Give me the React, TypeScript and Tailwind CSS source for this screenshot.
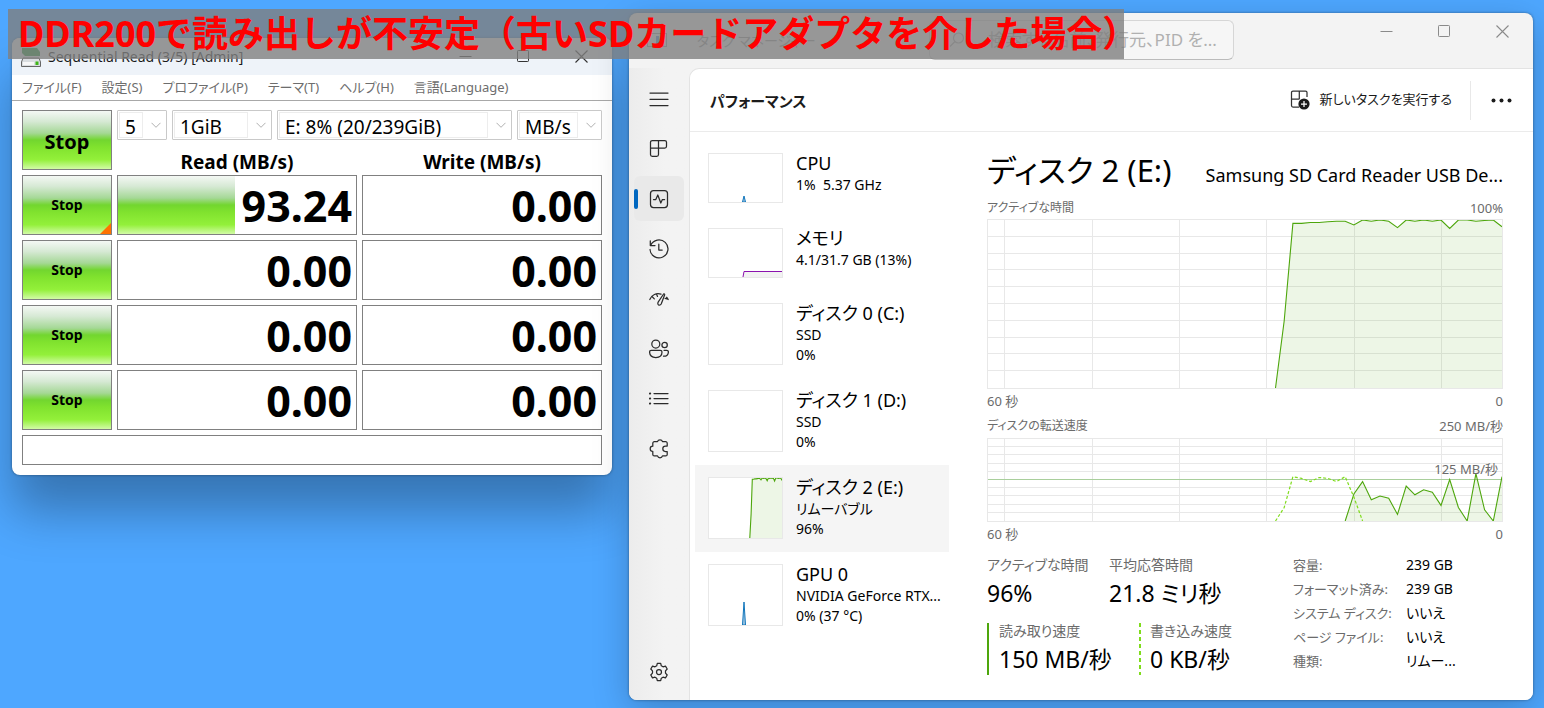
import type { ReactNode } from 'react';

const SANS = "font-['Noto_Sans','Noto_Sans_CJK_JP',sans-serif]";

const activeTime = [
  0, 40, 98, 98, 98.5, 98.5, 99, 99.3, 99.3, 97, 100, 99.3, 100, 99.3, 95.5, 100, 99.3, 100, 99.3, 100, 95, 100, 100,
  99.3, 99.7, 100, 96,
];
const readSpeed = [0, 33, 48, 26, 30.5, 27.7, 8, 42.6, 32, 38, 35, 19, 50.6, 16.5, 0, 57.8, 13.7, 0, 54];
const writeSpeed = [0, 16.5, 54, 52, 48, 53, 52, 48, 54, 29, 0];

const tests = [
  { read: '93.24', write: '0.00', progress: 49, marked: true },
  { read: '0.00', write: '0.00', progress: 0, marked: false },
  { read: '0.00', write: '0.00', progress: 0, marked: false },
  { read: '0.00', write: '0.00', progress: 0, marked: false },
];

const menus = ['ファイル(F)', '設定(S)', 'プロファイル(P)', 'テーマ(T)', 'ヘルプ(H)', '言語(Language)'];

// Samples are one second apart, the newest one sits at the right edge
function toPoints(values: number[], width: number, height: number, newest = 0) {
  const step = width / 59;
  return values.map((v, i) => {
    const x = width - (newest + values.length - 1 - i) * step;
    const y = height - (v / 100) * height;
    return [Math.round(x * 10) / 10, Math.round(y * 10) / 10];
  });
}

function Area({ values, width, height }: { values: number[]; width: number; height: number }) {
  const pts = toPoints(values, width, height);
  const line = pts.map(p => p.join(',')).join(' ');
  return (
    <>
      <polygon points={`${pts[0][0]},${height} ${line} ${width},${height}`} fill="#4da60c" fillOpacity="0.1" />
      <polyline points={line} fill="none" stroke="#4da60c" strokeWidth="1.1" vectorEffect="non-scaling-stroke" />
    </>
  );
}

function Chart({ height, label, children }: { height: number; label: string; children: ReactNode }) {
  const columns = [16, 104, 191, 278, 366, 453];
  return (
    <svg
      role="img"
      aria-label={label}
      viewBox={`0 0 514 ${height}`}
      preserveAspectRatio="none"
      className="block h-full w-full overflow-hidden"
    >
      <g stroke="#e8e8e8" strokeWidth="1">
        {columns.map(x => (
          <line key={x} x1={x + 0.5} x2={x + 0.5} y1="0" y2={height} />
        ))}
        {[1, 2, 3, 4, 5, 6, 7, 8, 9].map(i => (
          <line key={i} x1="0" x2="514" y1={Math.round((height * i) / 10) - 0.5} y2={Math.round((height * i) / 10) - 0.5} />
        ))}
      </g>
      {children}
    </svg>
  );
}

function WindowControls({ color }: { color: string }) {
  return (
    <div className={`flex shrink-0 pr-[2px] ${color}`}>
      <button aria-label="最小化" className="flex h-9 w-[58px] items-center justify-center">
        <svg width="13" height="13" viewBox="0 0 13 13" fill="none" stroke="currentColor"><path d="M0.5 6.5h12" /></svg>
      </button>
      <button aria-label="最大化" className="flex h-9 w-[58px] items-center justify-center">
        <svg width="13" height="13" viewBox="0 0 13 13" fill="none" stroke="currentColor"><rect x="0.5" y="0.5" width="11" height="11" rx="0.8" /></svg>
      </button>
      <button aria-label="閉じる" className="flex h-9 w-[58px] items-center justify-center">
        <svg width="13" height="13" viewBox="0 0 13 13" fill="none" stroke="currentColor" strokeWidth="1.1"><path d="M0.5 0.5l12 12M12.5 0.5l-12 12" /></svg>
      </button>
    </div>
  );
}

function Dropdown({ label, value, className }: { label: string; value: string; className: string }) {
  return (
    <div className={`relative h-[30px] rounded-[1px] border border-[#c9c9c9] bg-white p-px ${className}`}>
      <select
        aria-label={label}
        className="h-full w-[calc(100%-22px)] appearance-none border border-[#ededed] bg-white pl-[5px] pt-[2px] text-[19px] leading-6 text-black"
      >
        <option>{value}</option>
      </select>
      <svg className="pointer-events-none absolute right-[5px] top-[11px]" width="10" height="7" viewBox="0 0 10 7" fill="none" stroke="#b0b0b0">
        <path d="M0.5 0.8L5 5.3L9.5 0.8" />
      </svg>
    </div>
  );
}

const GREEN =
  'bg-[linear-gradient(to_bottom,#f4f8f4_0%,#d6e9d4_18%,#a5d896_38%,#72d62f_50%,#80e22e_62%,#93f03a_84%,#d2fba6_100%)]';

function DiskMarkWindow() {
  return (
    <section className="mt-[38px] w-[600px] shrink-0 self-start overflow-hidden rounded-lg bg-white shadow-[0_36px_50px_rgba(0,0,0,0.3),0_0_3px_rgba(0,0,0,0.4)]">
      <header className="flex h-[37px] items-center justify-between bg-[#eef3f9] pl-[9px]">
        <div className="flex items-center gap-[7px]">
          <svg width="20" height="22" viewBox="0 0 20 22">
            <path d="M1 2h15l3 4v4H4L1 7z" fill="#1f9b3a" />
            <path d="M2 12h16l1.500 4v4.500H0.500V16z" fill="#d9dde0" stroke="#666" strokeWidth="1" />
            <rect x="2" y="16" width="11" height="3" fill="#f7f7f7" />
            <rect x="14.500" y="15.500" width="3" height="3.500" fill="#3fb618" />
          </svg>
          <h1 className="text-sm leading-5 text-[#1a1a1a]">Sequential Read (3/5) [Admin]</h1>
        </div>
        <WindowControls color="text-[#333]" />
      </header>
      <nav className="flex h-[26px] items-center gap-5 border-b border-[#a8a8a8] px-[10px] text-[13px] text-[#6d6d6d]">
        {menus.map(m => (
          <button key={m} className="whitespace-nowrap">{m}</button>
        ))}
      </nav>

      <div className="grid grid-cols-[90px_1fr_1fr] gap-[5px] px-[10px] pb-[10px] pt-[9px]">
        <button className={`h-[60px] border border-[#808080] pt-1 text-xl font-bold text-black ${GREEN}`}>Stop</button>
        <div className="col-span-2 h-[60px]">
          <div className="flex gap-[5px]">
            <Dropdown label="回数" value="5" className="w-[50px]" />
            <Dropdown label="サイズ" value="1GiB" className="w-[100px]" />
            <Dropdown label="ドライブ" value="E: 8% (20/239GiB)" className="flex-1" />
            <Dropdown label="単位" value="MB/s" className="w-[85px]" />
          </div>
          <div className="grid grid-cols-2 gap-[5px] pt-3 text-center text-[19px] font-bold leading-5 text-black">
            <h2>Read (MB/s)</h2>
            <h2>Write (MB/s)</h2>
          </div>
        </div>

        {tests.map((t, i) => (
          <div key={i} className="contents">
            <button className={`relative h-[60px] border border-[#808080] text-sm font-bold text-black ${GREEN}`}>
              Stop
              {t.marked && (
                <svg className="absolute bottom-0 right-0" width="11" height="11" viewBox="0 0 11 11"><path d="M11 0v11H0z" fill="#ff7200" /></svg>
              )}
            </button>
            <div className="relative h-[60px] border border-[#808080] bg-white pr-1 text-right text-[43px] font-bold leading-[60px] text-black">
              <div className={`absolute inset-y-0 left-0 ${GREEN}`} style={{ width: `${t.progress}%` }}></div>
              <span className="relative">{t.read}</span>
            </div>
            <div className="h-[60px] border border-[#808080] bg-white pr-1 text-right text-[43px] font-bold leading-[60px] text-black">
              {t.write}
            </div>
          </div>
        ))}
        <div className="col-span-3 h-[30px] border border-[#808080] bg-white"></div>
      </div>
    </section>
  );
}

function Icon({ children }: { children: ReactNode }) {
  return (
    <svg width="20" height="20" viewBox="0 0 20 20" fill="none" stroke="#2b2b2b" strokeWidth="1.25" strokeLinecap="round" strokeLinejoin="round">
      {children}
    </svg>
  );
}

const navItems = [
  { label: 'メニュー', icon: <path d="M1 4h18M1 10.300h18M1 16.500h18" /> },
  {
    label: 'プロセス',
    icon: <path d="M3.300 1.500h12.400a1.800 1.800 0 0 1 1.800 1.800v3.900a1.800 1.800 0 0 1-1.800 1.800H1.500V3.300A1.800 1.800 0 0 1 3.300 1.500zM9.500 1.500v14a1.800 1.800 0 0 1-1.800 1.800H3.300A1.800 1.800 0 0 1 1.500 15.500V9" />,
  },
  {
    label: 'パフォーマンス',
    icon: (
      <>
        <rect x="1.500" y="1.500" width="17" height="17" rx="3" />
        <path d="M4.500 10.500h2.300L8.800 6l3 8 1.600-3.500h2.200" />
      </>
    ),
  },
  {
    label: 'アプリの履歴',
    icon: <path d="M1.300 1.800v4.700h4.700M1.700 6.300A9 9 0 1 1 1 10.500M9.800 5.200v5.800h3.400" />,
  },
  {
    label: 'スタートアップ アプリ',
    icon: (
      <>
        <path d="M0.800 10.500C2.600 5.800 7.500 3.600 12 5.200M17.600 8.300c0.700 0.700 1.200 1.400 1.600 2.200M3 7.500l2.300 2.400M7.400 4.800l1.100 2.600M18.900 10.200l-2.800-0.800" />
        <path d="M14.600 5L9.300 12.900c-1.700 2.800 1.500 4.700 3 1.800L15.600 6c0.300-0.900-0.500-1.500-1-1z" />
      </>
    ),
  },
  {
    label: 'ユーザー',
    icon: (
      <>
        <circle cx="6.800" cy="5" r="4" />
        <circle cx="15.600" cy="6" r="2.700" />
        <path d="M2.300 11.300h9a1.700 1.700 0 0 1 1.700 1.700c0 3.500-2.500 5.500-6.200 5.500S0.600 16.500 0.600 13a1.700 1.700 0 0 1 1.700-1.700zM15 11.300h2.800a1.600 1.600 0 0 1 1.600 1.600c0 2.800-1.800 4.500-4.900 4.300" />
      </>
    ),
  },
  {
    label: '詳細',
    icon: (
      <>
        <path d="M5 4.500h14M5 9.500h14M5 14.500h14" />
        <path d="M1 4.500h0.100M1 9.500h0.100M1 14.500h0.100" strokeWidth="2.200" />
      </>
    ),
  },
  {
    label: 'サービス',
    icon: <path d="M8.500 2.700a2.600 2.600 0 0 1 5 0h3.200a1.500 1.500 0 0 1 1.500 1.500v2.900h-1.700a2.700 2.700 0 0 0 0 5.400h1.700v2.900a1.500 1.500 0 0 1-1.500 1.500h-3.200a2.600 2.600 0 0 1-5 0H5.300a1.500 1.500 0 0 1-1.500-1.500v-3a2.600 2.600 0 0 1 0-5.200V4.200a1.500 1.500 0 0 1 1.500-1.500z" />,
  },
];

function SideNav() {
  return (
    <nav className="flex w-[60px] shrink-0 flex-col gap-[5px] bg-gradient-to-r from-[#ececec] to-[#f3f3f3] to-60% px-[5px] pb-[6px] pt-2">
      {navItems.map((item, i) => (
        <button
          key={item.label}
          aria-label={item.label}
          className={`relative flex h-[45px] w-[50px] items-center justify-center rounded-md ${i === 2 ? 'bg-[#e9e9e9]' : ''}`}
        >
          {i === 2 && <span className="absolute left-0 top-[13px] h-5 w-1 rounded-full bg-[#0067c0]"></span>}
          <Icon>{item.icon}</Icon>
        </button>
      ))}
      <button aria-label="設定" className="mt-auto flex h-[45px] w-[50px] items-center justify-center">
        <Icon>
          <circle cx="10" cy="10" r="2.500" />
          <path d="M8.300 1.300h3.400l0.600 2.500 1.700 1 2.500-0.700 1.700 2.900-1.700 1.900v2.200l1.700 1.900-1.700 2.900-2.500-0.700-1.700 1-0.600 2.500H8.300l-0.600-2.500-1.700-1-2.500 0.700L1.800 13l1.700-1.900V8.900L1.800 7l1.700-2.900 2.500 0.700 1.700-1z" />
        </Icon>
      </button>
    </nav>
  );
}

interface Resource {
  name: string;
  lines: string[];
  graph?: ReactNode;
}

const resources: Resource[] = [
  { name: 'CPU', lines: ['1%\u00a0 5.37 GHz'], graph: <path d="M33.500 48L35 42l1.500 6z" fill="#1175bb" fillOpacity="0.4" stroke="#1175bb" /> },
  {
    name: 'メモリ',
    lines: ['4.1/31.7 GB (13%)'],
    graph: (
      <>
        <path d="M34 48l1-5.500h38V48z" fill="#f2f2f2" />
        <path d="M34 48l1-5.500h38" fill="none" stroke="#8b12ae" />
      </>
    ),
  },
  { name: 'ディスク 0 (C:)', lines: ['SSD', '0%'] },
  { name: 'ディスク 1 (D:)', lines: ['SSD', '0%'] },
  { name: 'ディスク 2 (E:)', lines: ['リムーバブル', '96%'], graph: <Area values={activeTime} width={73} height={60} /> },
  { name: 'GPU 0', lines: ['NVIDIA GeForce RTX...', '0% (37 °C)'], graph: <path d="M33.500 60L35 37l1.500 23z" fill="#1175bb" fillOpacity="0.4" stroke="#1175bb" /> },
];

function ResourceList() {
  return (
    <ul className="w-[254px] shrink-0 pt-[9px]">
      {resources.map((r, i) => {
        const tall = r.lines.length > 1;
        return (
          <li key={r.name}>
            <button className={`flex w-full items-start gap-[13px] px-[13px] pb-[13px] pt-[10px] text-left ${i === 4 ? 'bg-[#f5f5f5]' : ''}`}>
              <span className={`mt-[2px] block w-[75px] shrink-0 border border-[#e8e8e8] bg-white ${tall ? 'h-[62px]' : 'h-[50px]'}`}>
                <svg className="block h-full w-full" viewBox={tall ? '0 0 73 60' : '0 0 73 48'}>{r.graph}</svg>
              </span>
              <span className="block whitespace-nowrap text-sm leading-5 text-black">
                <span className="block text-lg leading-6">{r.name}</span>
                {r.lines.map(l => (
                  <span key={l} className="block h-5">{l}</span>
                ))}
              </span>
            </button>
          </li>
        );
      })}
    </ul>
  );
}

const properties = [
  ['容量:', '239 GB'],
  ['フォーマット済み:', '239 GB'],
  ['システム ディスク:', 'いいえ'],
  ['ページ ファイル:', 'いいえ'],
  ['種類:', 'リムー...'],
];

function Stat({ label, value, className = '' }: { label: string; value: string; className?: string }) {
  return (
    <div className={`h-[52px] whitespace-nowrap ${className}`}>
      <dt className="text-sm leading-4 text-[#6b6b6b]">{label}</dt>
      <dd className="text-[23px] leading-10 text-black">{value}</dd>
    </div>
  );
}

function DiskDetail() {
  return (
    <div className="ml-[38px] mr-[30px] min-w-0 flex-1 pt-[14px]">
      <div className="flex items-baseline justify-between gap-6">
        <h2 className="whitespace-nowrap text-[31px] leading-[48px] text-black">ディスク 2 (E:)</h2>
        <p className="truncate text-lg text-black">Samsung SD Card Reader USB De...</p>
      </div>
      <div className="mt-1 flex justify-between text-[13px] leading-5 text-[#6b6b6b]">
        <span className="text-xs leading-5">アクティブな時間</span>
        <span>100%</span>
      </div>
      <div className="mt-px h-[170px] border border-[#e8e8e8]">
        <Chart height={168} label="アクティブな時間">
          <Area values={activeTime} width={514} height={168} />
        </Chart>
      </div>
      <div className="mt-[2px] flex justify-between text-[13px] leading-5 text-[#6b6b6b]">
        <span>60 秒</span>
        <span>0</span>
      </div>
      <div className="mt-[5px] flex justify-between text-[13px] leading-5 text-[#6b6b6b]">
        <span className="text-xs leading-5">ディスクの転送速度</span>
        <span>250 MB/秒</span>
      </div>
      <div className="relative mt-[2px] h-[84px] border border-[#e8e8e8]">
        <Chart height={82} label="ディスクの転送速度">
          <line x1="0" x2="514" y1="40.500" y2="40.500" stroke="#a9cf9c" />
          <Area values={readSpeed} width={514} height={82} />
          <polyline
            points={toPoints(writeSpeed, 514, 82, 16).map(p => p.join(',')).join(' ')}
            fill="none"
            stroke="#7fdc1c"
            strokeWidth="1.2"
            strokeDasharray="3 2"
          />
        </Chart>
        <span className="absolute right-1 top-5 text-[13px] leading-5 text-[#6b6b6b]">125 MB/秒</span>
      </div>
      <div className="mt-[2px] flex justify-between text-[13px] leading-5 text-[#6b6b6b]">
        <span>60 秒</span>
        <span>0</span>
      </div>

      <div className="mt-[13px] flex items-start">
        <dl className="grid flex-1 grid-cols-[122px_1fr] gap-y-[14px]">
          <Stat label="アクティブな時間" value="96%" />
          <Stat label="平均応答時間" value="21.8 ミリ秒" />
          <div className="col-span-2 flex">
            <Stat label="読み取り速度" value="150 MB/秒" className="w-[152px] border-l-2 border-[#4da60c] pl-[10px]" />
            <div className="flex gap-[9px]">
              <svg width="2" height="52" viewBox="0 0 2 52"><path d="M1 0v52" stroke="#7fdc1c" strokeWidth="2" strokeDasharray="4 3" /></svg>
              <Stat label="書き込み速度" value="0 KB/秒" />
            </div>
          </div>
        </dl>
        <dl className="-mt-1 w-[210px] shrink-0 text-sm leading-6">
          {properties.map(([k, v]) => (
            <div key={k} className="flex h-6 whitespace-nowrap">
              <dt className="w-[113px] text-[13px] leading-6 text-[#6b6b6b]">{k}</dt>
              <dd className="text-black">{v}</dd>
            </div>
          ))}
        </dl>
      </div>
    </div>
  );
}

function TaskManagerWindow() {
  return (
    <section className="mb-2 mt-[13px] flex min-w-0 flex-1 flex-col overflow-hidden rounded-lg bg-[#f3f3f3] shadow-[0_10px_36px_rgba(0,0,0,0.22),0_0_3px_rgba(0,0,0,0.4)]">
      <header className="flex h-[55px] shrink-0 items-start pl-[18px]">
        <div className="flex w-[282px] items-center gap-[30px] self-center">
          <svg width="20" height="16" viewBox="0 0 20 16" fill="none" stroke="#999">
            <rect x="0.500" y="0.500" width="19" height="13" />
            <rect x="9" y="3" width="3" height="10" fill="#4a90d9" stroke="none" />
            <rect x="14" y="6" width="3" height="7" fill="#4a90d9" stroke="none" />
          </svg>
          <h1 className="whitespace-nowrap text-sm text-[#999]">タスク マネージャー</h1>
        </div>
        <label className="mt-[7px] flex h-10 w-[305px] items-center gap-[22px] rounded-md border border-[#d6d6d6] border-b-[#bbb] bg-[#f6f6f6] pl-[18px]">
          <svg width="18" height="18" viewBox="0 0 18 18" fill="none" stroke="#aaa" strokeWidth="1.200">
            <circle cx="10.500" cy="7" r="5" />
            <path d="M7 10.500L2 15.500" />
          </svg>
          <input
            type="text"
            aria-label="検索"
            placeholder="検索する名前、発行元、PID を..."
            className="min-w-0 flex-1 bg-transparent text-[17px] outline-none placeholder:text-[#b0b0b0]"
          />
        </label>
        <div className="ml-auto">
          <WindowControls color="text-[#8a8a8a]" />
        </div>
      </header>
      <div className="flex flex-1">
        <SideNav />
        <main className="flex min-w-0 flex-1 flex-col rounded-tl-[10px] border-l border-t border-[#e3e3e3] bg-white">
          <header className="flex h-[63px] shrink-0 items-center border-b border-[#ebebeb] pl-5 pr-[21px]">
            <h2 className="flex-1 pt-[2px] text-[15px] font-bold text-[#1b1b1b]">パフォーマンス</h2>
            <button className="flex items-center gap-[10px] text-[13px] text-[#1b1b1b]">
              <svg width="20" height="20" viewBox="0 0 20 20" fill="none" stroke="#333" strokeWidth="1.250">
                <path d="M9 17H3a1.500 1.500 0 0 1-1.500-1.500V2.500A1.500 1.500 0 0 1 3 1h12.500A1.500 1.500 0 0 1 17 2.500V7M9.300 1v8M1.500 9h8" />
                <circle cx="14" cy="14" r="5.600" fill="#1b1b1b" stroke="none" />
                <path d="M14 11v6M11 14h6" stroke="#fff" />
              </svg>
              新しいタスクを実行する
            </button>
            <div className="ml-[18px] h-[39px] w-px bg-[#e8e8e8]"></div>
            <button aria-label="その他のオプション" className="ml-5">
              <svg width="21" height="5" viewBox="0 0 21 5" fill="#1b1b1b"><circle cx="2.500" cy="2.500" r="2" /><circle cx="10.500" cy="2.500" r="2" /><circle cx="18.500" cy="2.500" r="2" /></svg>
            </button>
          </header>
          <div className="flex flex-1 pl-[5px]">
            <ResourceList />
            <DiskDetail />
          </div>
        </main>
      </div>
    </section>
  );
}

export default function App() {
  return (
    <div className={`relative flex min-h-screen gap-[17px] overflow-hidden bg-[#4ea7ff] pl-3 pr-[11px] [font-feature-settings:'palt'] ${SANS}`}>
      <DiskMarkWindow />
      <TaskManagerWindow />
      {/* Caption laid over both windows */}
      <p className="absolute left-2 top-[9px] h-[50px] w-[1116px] whitespace-nowrap bg-[#808080]/80 pl-[10px] text-[36px] font-bold leading-[50px] text-[#ff0000] [font-feature-settings:normal]">
        DDR200で読み出しが不安定（古いSDカードアダプタを介した場合）
      </p>
    </div>
  );
}
